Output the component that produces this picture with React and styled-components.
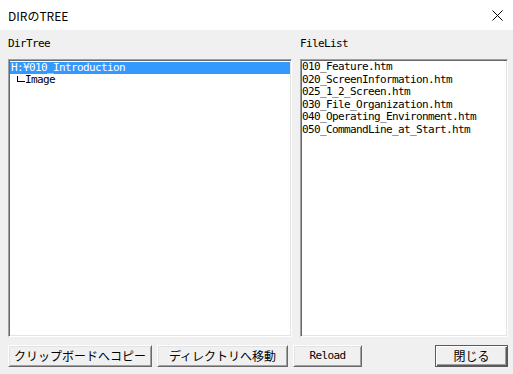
import React from 'react';
import styled, { createGlobalStyle } from 'styled-components';

const GlobalStyle = createGlobalStyle`
  html, body {
    margin: 0;
    padding: 0;
    width: 513px;
    height: 374px;
    overflow: hidden;
    background: #f0f0f0;
  }
`;

const Window = styled.div`
  width: 513px;
  height: 374px;
  display: flex;
  flex-direction: column;
  background: #f0f0f0;
  color: #000;
`;

const TitleBar = styled.div`
  height: 30px;
  flex: none;
  background: #fff;
  display: flex;
  align-items: center;
  padding-left: 8px;
  font-family: "Noto Sans CJK JP", "Noto Sans", sans-serif;
  font-size: 12px;
`;

const TitleText = styled.span`
  flex: 1;
  line-height: 14px;
  margin-top: 1px;
`;

const CloseButton = styled.div`
  width: 31px;
  height: 30px;
  display: flex;
  align-items: center;
  justify-content: center;
`;

const Body = styled.div`
  flex: 1;
  display: flex;
  flex-direction: column;
  padding: 0 5px 0 8px;
`;

const Panels = styled.div`
  display: grid;
  grid-template-columns: 284px 208px;
  column-gap: 8px;
`;

const Column = styled.div`
  display: flex;
  flex-direction: column;
`;

const Label = styled.div`
  height: 29px;
  box-sizing: border-box;
  padding-top: 7px;
  font-family: "DejaVu Sans Mono", monospace;
  font-size: 11px;
  letter-spacing: -0.62px;
  line-height: 13px;
`;

const Sunken = styled.div`
  height: 278px;
  box-sizing: border-box;
  background: #fff;
  border: 1px solid;
  border-color: #a0a0a0 #fff #fff #a0a0a0;
  box-shadow: inset 1px 1px #696969, inset -1px -1px #e3e3e3;
  padding: ${p => p.$pad};
  font-family: "DejaVu Sans Mono", monospace;
  font-size: 11px;
  letter-spacing: -0.62px;
  overflow: hidden;
`;

const TreeRow = styled.div`
  display: flex;
  align-items: flex-start;
  height: 12px;
  line-height: 12px;
  padding-left: ${p => p.$indent}px;
  background: ${p => (p.$selected ? '#3399ff' : 'transparent')};
  color: ${p => (p.$selected ? '#fff' : '#000')};
  white-space: pre;
`;

const TreeLine = styled.span`
  flex: none;
  width: 8px;
  height: 6px;
  margin-top: 2px;
  box-sizing: border-box;
  border-left: 1px solid #000;
  border-bottom: 1px solid #000;
`;

const FileItem = styled.div`
  height: 12.5px;
  line-height: 12.5px;
  white-space: pre;
`;

const ButtonRow = styled.div`
  display: flex;
  margin-top: 8px;
  height: 22px;
`;

const Button = styled.div`
  width: ${p => p.$w}px;
  margin-left: ${p => p.$ml || 0}px;
  box-sizing: border-box;
  height: 22px;
  background: #f0f0f0;
  border: 1px solid;
  border-color: ${p => (p.$default ? '#5a5a5a' : '#fff #696969 #696969 #fff')};
  box-shadow: ${p =>
    p.$default
      ? 'inset 1px 1px #fff, inset -1px -1px #5a5a5a, inset -2px -2px #a0a0a0'
      : 'inset 1px 1px #e3e3e3, inset -1px -1px #a0a0a0'};
  display: flex;
  align-items: center;
  justify-content: center;
  font-family: ${p => (p.$mono ? '"DejaVu Sans Mono", monospace' : '"Noto Sans CJK JP", sans-serif')};
  font-size: ${p => (p.$mono ? '11px' : '12px')};
  letter-spacing: ${p => (p.$mono ? '-0.62px' : '0')};
  line-height: 14px;
  white-space: nowrap;
`;

const Spacer = styled.div`
  flex: 1;
`;

const files = [
  '010_Feature.htm',
  '020_ScreenInformation.htm',
  '025_1_2_Screen.htm',
  '030_File_Organization.htm',
  '040_Operating_Environment.htm',
  '050_CommandLine_at_Start.htm',
];

export default function App() {
  return (
    <Window>
      <GlobalStyle />
      <TitleBar>
        <TitleText>DIRのTREE</TitleText>
        <CloseButton>
          <svg width="11" height="11" viewBox="0 0 11 11">
            <path d="M0.5 0.5 L10.5 10.5 M10.5 0.5 L0.5 10.5" stroke="#000" strokeWidth="1" fill="none" />
          </svg>
        </CloseButton>
      </TitleBar>
      <Body>
        <Panels>
          <Column>
            <Label>DirTree</Label>
            <Sunken $pad="2px 1px 1px 1px">
              <TreeRow $selected $indent={1}>H:¥010_Introduction</TreeRow>
              <TreeRow $indent={7}>
                <TreeLine />
                Image
              </TreeRow>
            </Sunken>
          </Column>
          <Column>
            <Label>FileList</Label>
            <Sunken $pad="1px 1px 1px 1px">
              {files.map(f => (
                <FileItem key={f}>{f}</FileItem>
              ))}
            </Sunken>
          </Column>
        </Panels>
        <ButtonRow>
          <Button $w={144}>クリップボードへコピー</Button>
          <Button $w={131} $ml={5}>ディレクトリへ移動</Button>
          <Button $w={69} $ml={5} $mono>Reload</Button>
          <Spacer />
          <Button $w={73} $default>閉じる</Button>
        </ButtonRow>
      </Body>
    </Window>
  );
}
